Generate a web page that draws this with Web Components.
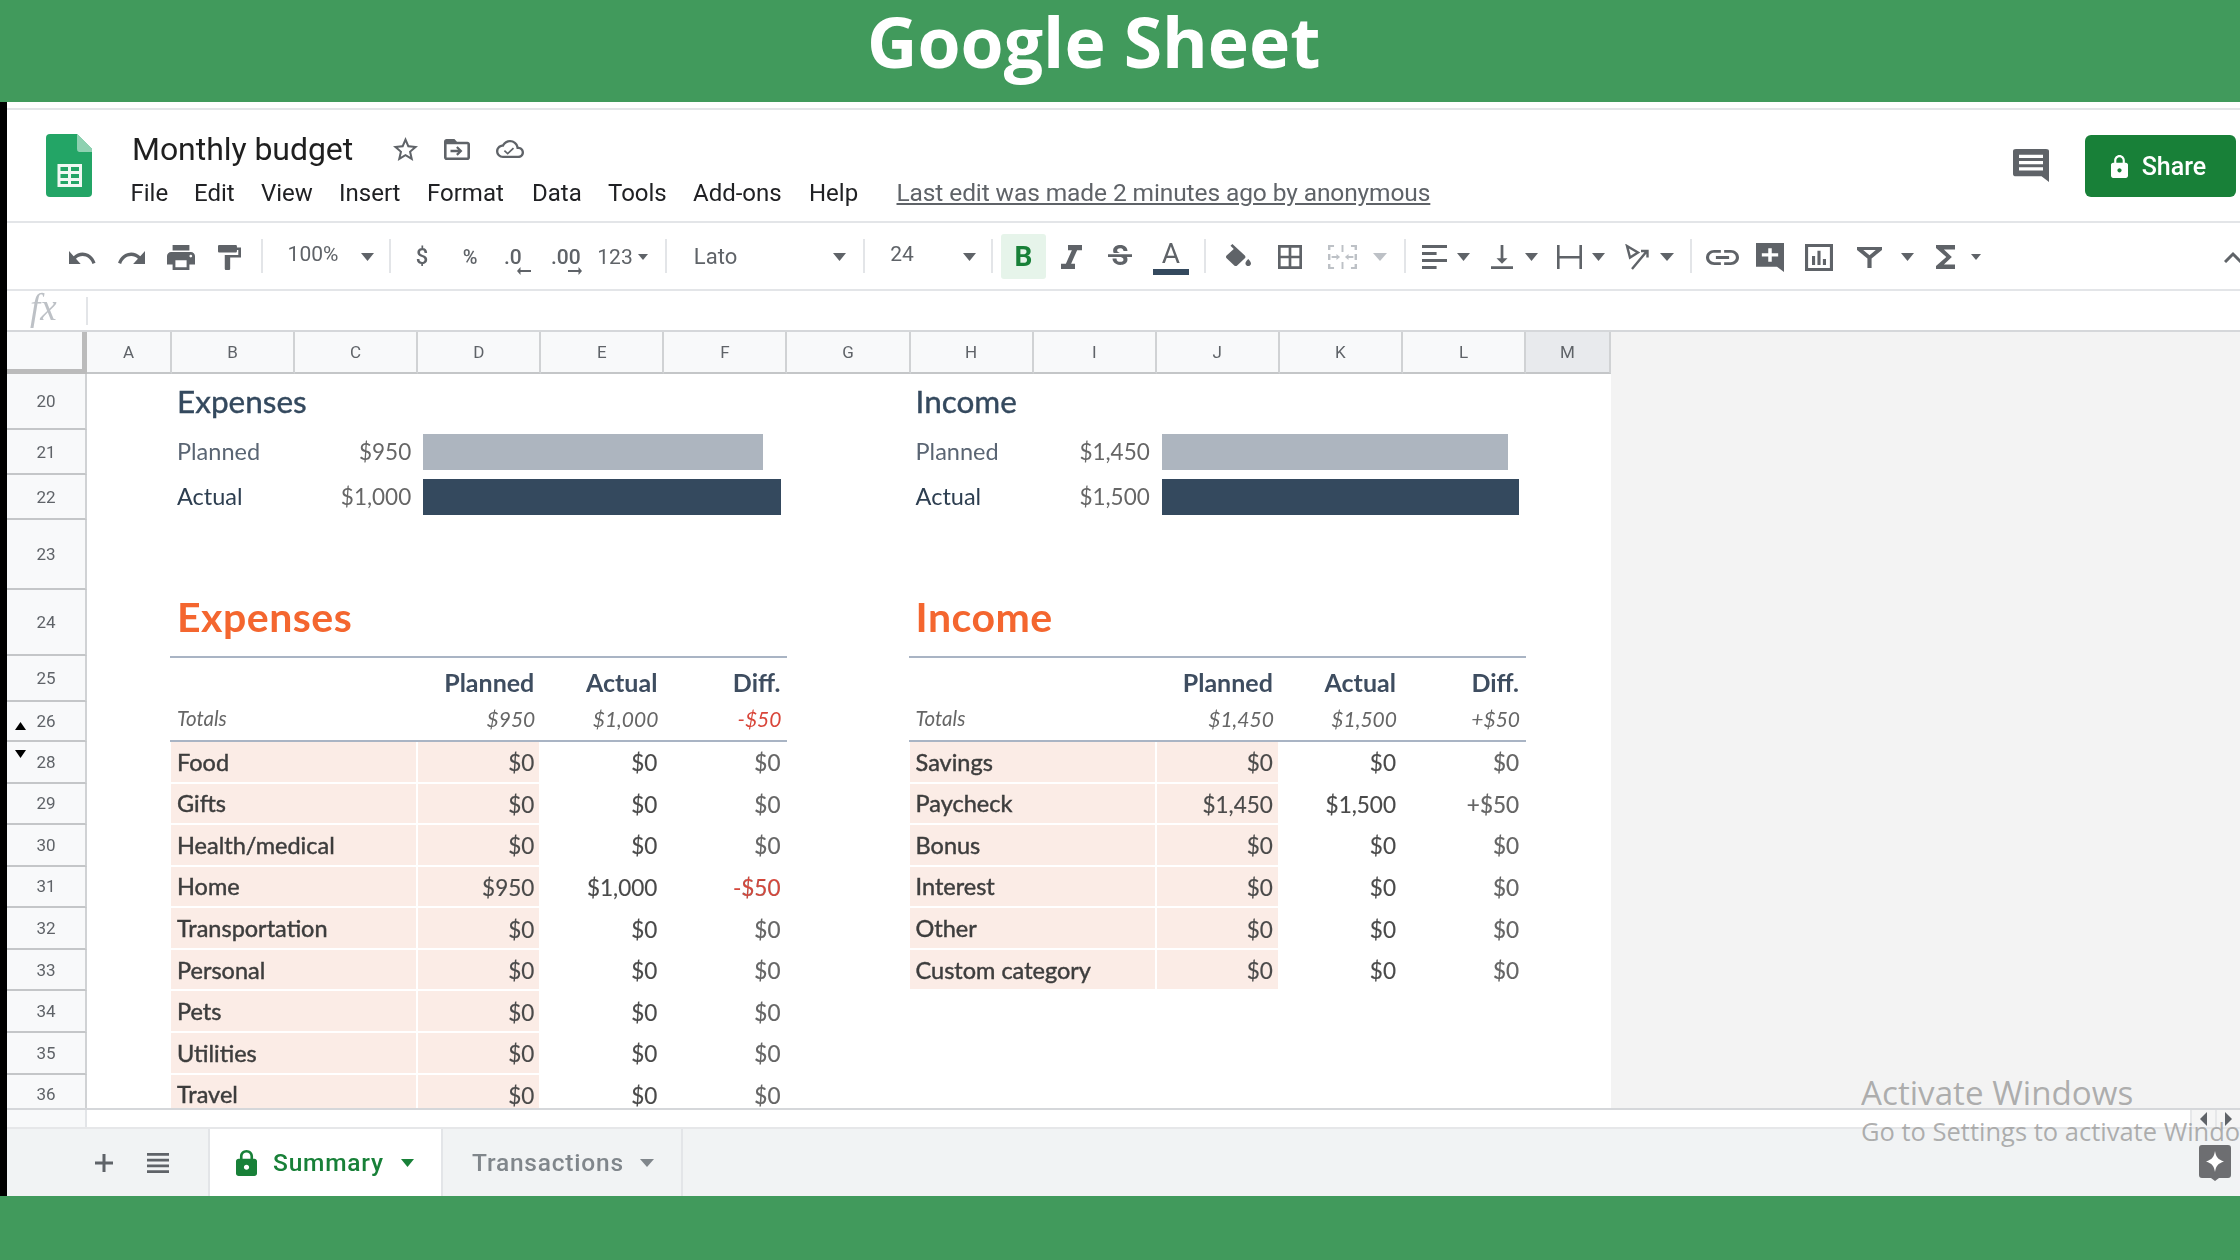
<!DOCTYPE html>
<html>
<head>
<meta charset="utf-8">
<title>Google Sheet</title>
<style>
    html, body { margin: 0; padding: 0; background: #419a5c; }
</style>
</head>
<body>
<budget-page></budget-page>
<script>
// svg helper, viewBox is tight on the glyph so w/h are what gets drawn
function ic(d, vb, w, h, fill, extra) {
    return `<svg xmlns="http://www.w3.org/2000/svg" viewBox="${vb}" width="${w}" height="${h}" preserveAspectRatio="none" fill="${fill || '#5f6368'}" fill-rule="evenodd" style="display:block;${extra || ''}"><path d="${d}"/></svg>`;
}
function caret(w, h, fill) {
    return ic('M0 0h10L5 6z', '0 0 10 6', w || 13, h || 8, fill);
}
const LOCK = 'M18 8h-1V6c0-2.76-2.24-5-5-5S7 3.24 7 6v2H6c-1.1 0-2 .9-2 2v10c0 1.1.9 2 2 2h12c1.1 0 2-.9 2-2V10c0-1.1-.9-2-2-2zm-6 9c-1.1 0-2-.9-2-2s.9-2 2-2 2 .9 2 2-.9 2-2 2zM9 8V6c0-1.66 1.34-3 3-3s3 1.34 3 3v2H9z';

class TopBanner extends HTMLElement {
    constructor() {
        super();
        this.attachShadow({ mode: 'open' }).innerHTML = `
        <style>
            :host { display: flex; flex: none; height: 102px; background: #419a5c; padding-left: 867px; box-sizing: border-box; }
            h1 { margin: 0; font: 700 69.7px/82px "Open Sans", sans-serif; color: #fff; white-space: nowrap; }
        </style>
        <h1><slot></slot></h1>`;
    }
}
customElements.define('top-banner', TopBanner);

class DocHeader extends HTMLElement {
    constructor() {
        super();
        const menu = [['File', 63.5], ['Edit', 67], ['View', 78], ['Insert', 88], ['Format', 105], ['Data', 76], ['Tools', 85], ['Add-ons', 116], ['Help', 87.5]];
        this.attachShadow({ mode: 'open' }).innerHTML = `
        <style>
            :host { display: flex; flex: none; height: 113px; box-sizing: border-box; padding: 24px 4px 0 39px; border-bottom: 2px solid #e3e5e8; background: #fff; font-family: Roboto, sans-serif; }
            .logo { margin-right: 40px; flex: none; }
            .main { display: flex; flex-direction: column; flex: 1; }
            .title { display: flex; align-items: center; height: 32px; margin-top: -1px; }
            .title b { font-weight: 400; font-size: 32px; letter-spacing: -.05px; color: #1f1f1f; width: 261px; white-space: nowrap; }
            .title svg { margin-right: 26px; }
            .menu { display: flex; align-items: center; height: 34px; margin: 11px 0 0 -1.5px; font-size: 24px; color: #202124; white-space: nowrap; }
            .menu a { display: block; flex: none; }
            .menu u { color: #5f6368; font-size: 24.5px; letter-spacing: -.1px; position: relative; top: -1px; }
            .comment { flex: none; margin: 15px 36px 0 0; }
            button { display: flex; align-items: center; justify-content: center; gap: 14px; width: 151px; height: 62px; margin-top: 1px; padding: 0 4px 0 0; border: 0; border-radius: 6px; background: #188038; color: #fff; font: 500 25px Roboto, sans-serif; }
        </style>
        <svg class="logo" width="46" height="63" viewBox="0 0 46 63">
            <path d="M4 0h27l15 15v44a4 4 0 0 1-4 4H4a4 4 0 0 1-4-4V4a4 4 0 0 1 4-4z" fill="#23a566"/>
            <path d="M31 0l15 15v3H33a3 3 0 0 1-2-3z" fill="#8ed1b1"/>
            <path d="M11.500 30h24.500v23H11.500zM14.500 33v4h7.500v-4zM25 33v4h8v-4zM14.500 40v4h7.500v-4zM25 40v4h8v-4zM14.500 47v3h7.500v-3zM25 47v3h8v-3z" fill="#f1f8f3" fill-rule="evenodd"/>
        </svg>
        <div class="main">
            <div class="title">
                <b>Monthly budget</b>
                ${ic('M22 9.24l-7.19-.62L12 2 9.19 8.63 2 9.24l5.46 4.73L5.82 21 12 17.27 18.18 21l-1.63-7.03L22 9.24zM12 15.4l-3.76 2.27 1-4.28-3.32-2.88 4.38-.38L12 6.1l1.71 4.04 4.38.38-3.32 2.88 1 4.28L12 15.4z', '2 2 20 19', 25, 24)}
                ${ic('M20 6h-8l-2-2H4c-1.1 0-2 .9-2 2v12c0 1.1.9 2 2 2h16c1.1 0 2-.9 2-2V8c0-1.1-.9-2-2-2zm0 12H4V8h16v10zM12.500 9.500l-1.200 1.200 1.500 1.500H7v1.800h5.800l-1.500 1.500 1.200 1.200 3.700-3.600z', '2 4 20 16', 26, 21)}
                ${ic('M19.35 10.04C18.67 6.59 15.64 4 12 4 9.11 4 6.6 5.64 5.35 8.04 2.34 8.36 0 10.91 0 14c0 3.31 2.69 6 6 6h13c2.76 0 5-2.24 5-5 0-2.64-2.05-4.78-4.65-4.96zM19 18H6c-2.21 0-4-1.79-4-4 0-2.05 1.53-3.76 3.56-3.97l1.07-.11.5-.95C8.08 7.14 9.94 6 12 6c2.62 0 4.88 1.86 5.39 4.43l.3 1.5 1.53.11c1.56.1 2.78 1.41 2.78 2.96 0 1.65-1.35 3-3 3zM10 15.200l-2.300-2.300-1 1L10 17.200l5.500-5.500-1-1z', '0 4 24 16', 28, 18)}
            </div>
            <div class="menu">
                ${menu.map(m => `<a style="width:${m[1]}px">${m[0]}</a>`).join('')}
                <u>Last edit was made 2 minutes ago by anonymous</u>
            </div>
        </div>
        ${ic('M2 0h20a2 2 0 0 1 2 2v27l-5-5H2a2 2 0 0 1-2-2V2a2 2 0 0 1 2-2zM4 5v3h16V5zM4 10.500v3h16v-3zM4 16v3h16v-3z', '0 0 24 29', 36, 33, '#5f6368').replace('<svg', '<svg class="comment"')}
        <button>${ic(LOCK, '4 1 16 21', 17, 23, '#fff')}<span>Share</span></button>`;
    }
}
customElements.define('doc-header', DocHeader);

class EditToolbar extends HTMLElement {
    constructor() {
        super();
        const txt = (s, extra) => `<span class="t" style="${extra || ''}">${s}</span>`;
        const sep = [261, 389, 665, 863, 991, 1204, 1404, 1690];
        const items = [
            [69, 28, ic('M12.5 8c-2.65 0-5.05.99-6.9 2.6L2 7v9h9l-3.62-3.62c1.39-1.16 3.16-1.88 5.12-1.88 3.54 0 6.55 2.31 7.6 5.5l2.37-.78C21.08 11.03 17.15 8 12.5 8z', '2 7 21.6 9', 28, 13)],
            [118, 27, ic('M18.4 10.6C16.55 8.99 14.15 8 11.5 8c-4.65 0-8.58 3.03-9.96 7.22L3.9 16c1.05-3.19 4.05-5.5 7.6-5.5 1.95 0 3.73.72 5.12 1.88L13 16h9V7l-3.6 3.6z', '1.5 7 20.5 9', 27, 13)],
            [167, 28, ic('M19 8H5c-1.66 0-3 1.34-3 3v6h4v4h12v-4h4v-6c0-1.66-1.34-3-3-3zm-3 11H8v-5h8v5zm3-7c-.55 0-1-.45-1-1s.45-1 1-1 1 .45 1 1-.45 1-1 1zm-1-9H6v4h12V3z', '2 3 20 18', 28, 25)],
            [218, 23, ic('M18 4V3c0-.55-.45-1-1-1H5c-.55 0-1 .45-1 1v4c0 .55.45 1 1 1h12c.55 0 1-.45 1-1V6h1v4H9v11c0 .55.45 1 1 1h2c.55 0 1-.45 1-1v-9h8V4h-3z', '4 2 17 20', 23, 25)],
            [288, 50, txt('100%', 'font-size:21px;margin-top:-5px')],
            [361, 13, caret()],
            [416, 12, txt('$', 'font-size:22px;font-weight:500')],
            [462, 16, txt('%', 'font-size:20px;font-weight:500')],
            [504, 27, `<span class="dec l"><span>.0</span>${ic('M6 0v3h18v2H6v3L0 4z', '0 0 24 8', 14, 8)}</span>`],
            [551, 31, `<span class="dec r"><span>.00</span>${ic('M18 0v3H0v2h18v3l6-4z', '0 0 24 8', 14, 8)}</span>`],
            [597, 36, txt('123', 'font-size:21px')],
            [638, 10, caret(10, 6)],
            [695, 41, txt('Lato', 'font-size:22px')],
            [833, 13, caret()],
            [890, 24, txt('24', 'font-size:21px;margin-top:-5px')],
            [963, 13, caret()],
            [1001, 45, `<span class="bold">B</span>`],
            [1061, 21, ic('M10 4v3h2.21l-3.42 8H6v3h8v-3h-2.21l3.42-8H18V4z', '6 4 12 14', 21, 24)],
            [1108, 24, ic('M6.85 7.08C6.85 4.37 9.45 3 12.24 3c1.64 0 3 .49 3.9 1.28.77.65 1.46 1.73 1.46 3.24h-3.01c0-.31-.05-.59-.15-.85-.29-.86-1.2-1.28-2.25-1.28-1.86 0-2.34 1.02-2.34 1.7 0 .48.25.88.74 1.21.38.25.77.48 1.41.7H7.39c-.21-.34-.54-.89-.54-1.92zM21 12v-2H3v2h9.62c1.15.45 1.96.75 1.96 1.97 0 1-.81 1.67-2.28 1.67-1.54 0-2.93-.54-2.93-2.51H6.4c0 .55.08 1.13.24 1.58.81 2.29 3.29 3.3 5.67 3.3 2.27 0 5.3-.89 5.3-4.05 0-.3-.01-1.16-.48-1.94H21V12z', '3 3 18 18', 24, 24)],
            [1153, 36, `<span class="color"><span>A</span><i></i></span>`],
            [1226, 25, ic('M16.56 8.94L7.62 0 6.21 1.41l2.38 2.38-5.15 5.15c-.59.59-.59 1.54 0 2.12l5.5 5.5c.29.29.68.44 1.06.44s.77-.15 1.06-.44l5.5-5.5c.59-.58.59-1.53 0-2.12zM19 11.5s-2 2.17-2 3.5c0 1.1.9 2 2 2s2-.9 2-2c0-1.33-2-3.5-2-3.5z', '3 0 18 17', 25, 22, '#5f6368', 'margin-top:-5px')],
            [1278, 24, ic('M3 3v18h18V3H3zm8 16H5v-6h6v6zm0-8H5V5h6v6zm8 8h-6v-6h6v6zm0-8h-6V5h6v6z', '3 3 18 18', 24, 24)],
            [1328, 29, ic('M0 0h5v2H2v3H0zM19 0h5v5h-2V2h-3zM0 19h2v3h3v2H0zM22 19h2v5h-5v-2h3zM0 9h2v6H0zM22 9h2v6h-2zM3 11h4V9l3 3-3 3v-2H3zM21 11h-4V9l-3 3 3 3v-2h4zM11.200 0h1.600v7h-1.600zM11.200 17h1.600v7h-1.600z', '0 0 24 24', 29, 24, '#bdc1c6')],
            [1373, 14, caret(14, 8, '#bdc1c6')],
            [1422, 25, ic('M0 0h24v3H0zM0 7h14v3H0zM0 14h24v3H0zM0 21h14v3H0z', '0 0 24 24', 25, 24)],
            [1457, 13, caret()],
            [1491, 22, ic('M16 13h-3V3h-2v10H8l4 4 4-4zM4 19v2h16v-2H4z', '4 3 16 18', 22, 24)],
            [1525, 13, caret()],
            [1557, 25, ic('M0 0h2.500v24H0zM21.500 0H24v24h-2.500zM2.500 11h19v2.500h-19z', '0 0 24 24', 25, 24)],
            [1592, 13, caret()],
            [1624, 26, `<svg width="26" height="26" viewBox="0 0 26 26" fill="none" stroke="#5f6368" stroke-width="2.4" style="display:block"><path d="M3 2l11 6.500-8 5z"/><path d="M8 25L23 7M17 7h6.500v6.500"/></svg>`],
            [1660, 14, caret(14, 8)],
            [1706, 33, ic('M3.9 12c0-1.71 1.39-3.1 3.1-3.1h4V7H7c-2.76 0-5 2.24-5 5s2.24 5 5 5h4v-1.9H7c-1.71 0-3.1-1.39-3.1-3.1zM8 13h8v-2H8v2zm9-6h-4v1.9h4c1.71 0 3.1 1.39 3.1 3.1s-1.39 3.1-3.1 3.1h-4V17h4c2.76 0 5-2.24 5-5s-2.24-5-5-5z', '2 7 20 10', 33, 15)],
            [1756, 28, ic('M0 0h24v28l-6-5H0zM10.500 5v5H5v3h5.500v5h3v-5H19v-3h-5.500V5z', '0 0 24 28', 28, 29)],
            [1805, 28, ic('M3 3h18v18H3zM5 5v14h14V5zM7.500 11h2v6h-2zM11 7.500h2v9.500h-2zM14.500 13h2v4h-2z', '3 3 18 18', 28, 27)],
            [1857, 25, ic('M0 0h24v3.500L14 13v11h-4V13L0 3.500zM6 3.500l6 6 6-6z', '0 0 24 24', 25, 21)],
            [1901, 13, caret()],
            [1936, 19, ic('M18 4H6v2l6.500 6L6 18v2h12v-3h-7l5-5-5-5h7z', '6 4 12 16', 19, 24)],
            [1971, 10, caret(10, 6)],
            [2224, 16, `<svg width="16" height="12" viewBox="0 0 16 12" fill="none" stroke="#5f6368" stroke-width="3" style="display:block"><path d="M1 11l8-8 8 8"/></svg>`]
        ];
        sep.forEach(x => items.push([x, 2, '<i class="sep"></i>']));
        items.sort((a, b) => a[0] - b[0]);
        let cursor = 7;
        const html = items.map(it => {
            const out = `<div class="it" style="margin-left:${it[0] - cursor}px;width:${it[1]}px">${it[2]}</div>`;
            cursor = it[0] + it[1];
            return out;
        }).join('');
        this.attachShadow({ mode: 'open' }).innerHTML = `
        <style>
            :host { display: flex; flex: none; align-items: center; height: 68px; padding-top: 2px; box-sizing: border-box; border-bottom: 2px solid #e3e5e8; background: #fff; font-family: Roboto, sans-serif; color: #5f6368; }
            .it { flex: none; display: flex; align-items: center; justify-content: center; }
            .t { white-space: nowrap; line-height: 1; }
            .sep { display: block; width: 2px; height: 34px; margin-top: -2px; background: #e3e5e8; }
            .dec { display: flex; flex-direction: column; font-size: 21px; font-weight: 500; line-height: 22px; width: 100%; margin-top: 6px; }
            .dec svg { margin-top: -1px; }
            .dec.l svg { align-self: flex-end; }
            .dec.r svg { align-self: flex-end; }
            .bold { display: flex; align-items: center; justify-content: center; width: 45px; height: 45px; margin-top: -1px; border-radius: 3px; background: #e6f4ea; color: #188038; font-size: 28px; font-weight: 700; }
            .color { display: flex; flex-direction: column; align-items: center; width: 100%; font-size: 28px; line-height: 28px; margin-top: 0; }
            .color i { display: block; width: 100%; height: 6px; margin-top: 1px; background: #34495e; }
        </style>
        ${html}`;
    }
}
customElements.define('edit-toolbar', EditToolbar);

class FormulaBar extends HTMLElement {
    constructor() {
        super();
        this.attachShadow({ mode: 'open' }).innerHTML = `
        <style>
            :host { display: flex; flex: none; align-items: center; height: 39px; box-sizing: border-box; background: #fff; }
            em { width: 79px; box-sizing: border-box; padding-left: 23px; font: italic 37px/38px "Liberation Serif", serif; color: #bdc1c6; margin-top: -5px; }
            i { display: block; width: 2px; height: 28px; background: #e3e5e8; }
        </style>
        <em>fx</em><i></i>`;
    }
}
customElements.define('formula-bar', FormulaBar);

class SheetGrid extends HTMLElement {
    constructor() {
        super();
        const rows = [20, 21, 22, 23, 24, 25, 26, 28, 29, 30, 31, 32, 33, 34, 35, 36];
        const heights = [56, 45, 45, 70, 66, 46, 40, 41.5, 41.6, 41.6, 41.6, 41.6, 41.6, 41.6, 41.6, 41.6];
        const letters = 'ABCDEFGHIJKLM'.split('');
        const rowOf = n => rows.indexOf(n) + 2;
        let c = '';
        const put = (col, span, row, cls, text) => {
            c += `<div class="${cls}" style="grid-column:${col}/span ${span};grid-row:${rowOf(row)}">${text}</div>`;
        };

        // headers
        c += `<div class="filler" style="grid-column:15;grid-row:1/-1"></div>`;
        c += `<div class="corner" style="grid-column:1;grid-row:1"></div>`;
        letters.forEach((l, i) => {
            c += `<div class="ch${l === 'M' ? ' sel' : ''}" style="grid-column:${i + 2};grid-row:1">${l}</div>`;
        });
        rows.forEach(n => {
            let mark = '';
            if (n === 26) mark = ic('M0 8L5 0l5 8z', '0 0 10 8', 11, 8, '#000', 'position:absolute;left:8px;bottom:10px');
            if (n === 28) mark = ic('M0 0l5 8 5-8z', '0 0 10 8', 11, 8, '#000', 'position:absolute;left:8px;top:8px');
            c += `<div class="rh" style="grid-column:1;grid-row:${rowOf(n)}">${n}${mark}</div>`;
        });
        c += `<div class="white" style="grid-column:2/15;grid-row:2/-1"></div>`;

        // a chart block and a table block, col is the grid line of its first column
        const block = (col, title, planned, actual, pw, aw, tot, lines) => {
            put(col, 2, 20, 'head', title);
            put(col, 1, 21, 'lab', 'Planned');
            put(col + 1, 1, 21, 'num grey', planned);
            put(col + 2, 3, 21, 'bar', `<i style="width:${pw}px;background:#adb5bf"></i>`);
            put(col, 1, 22, 'lab dark', 'Actual');
            put(col + 1, 1, 22, 'num grey', actual);
            put(col + 2, 3, 22, 'bar', `<i style="width:${aw}px;background:#34495e"></i>`);
            put(col, 2, 24, 'big', title);
            put(col, 5, 25, 'topline', '');
            put(col + 2, 1, 25, 'hn', 'Planned');
            put(col + 3, 1, 25, 'hn', 'Actual');
            put(col + 4, 1, 25, 'hn', 'Diff.');
            put(col, 5, 26, 'botline', '');
            put(col, 1, 26, 'tt', 'Totals');
            put(col + 2, 1, 26, 'tt r', tot[0]);
            put(col + 3, 1, 26, 'tt r', tot[1]);
            put(col + 4, 1, 26, 'tt r' + (tot[2][0] === '-' ? ' red' : ''), tot[2]);
            lines.forEach((l, i) => {
                const r = rows[7 + i];
                put(col, 2, r, 'pink first', '');
                put(col + 2, 1, r, 'pink', '');
                put(col, 2, r, 'cat', l[0]);
                put(col + 2, 1, r, 'val', l[1]);
                put(col + 3, 1, r, 'val', l[2]);
                put(col + 4, 1, r, 'val soft' + (l[3][0] === '-' ? ' red' : ''), l[3]);
            });
        };
        const z = ['$0', '$0', '$0'];
        block(3, 'Expenses', '$950', '$1,000', 340, 358, ['$950', '$1,000', '-$50'], [
            ['Food', ...z], ['Gifts', ...z], ['Health/medical', ...z],
            ['Home', '$950', '$1,000', '-$50'], ['Transportation', ...z], ['Personal', ...z],
            ['Pets', ...z], ['Utilities', ...z], ['Travel', ...z]
        ]);
        block(9, 'Income', '$1,450', '$1,500', 346, 357, ['$1,450', '$1,500', '+$50'], [
            ['Savings', ...z], ['Paycheck', '$1,450', '$1,500', '+$50'], ['Bonus', ...z],
            ['Interest', ...z], ['Other', ...z], ['Custom category', ...z]
        ]);

        this.attachShadow({ mode: 'open' }).innerHTML = `
        <style>
            :host { display: block; flex: none; height: 776px; overflow: hidden; border-top: 2px solid #d5d7da; border-bottom: 2px solid #d5d7da; background: #f3f3f3; }
            .g { display: grid; grid-template-columns: 80px 85px repeat(11, 123.1px) 85px 1fr; grid-template-rows: 42px ${heights.map(h => h + 'px').join(' ')}; font-family: Lato, sans-serif; }
            .filler { background: #f3f3f3; }
            .white { background: #fff; }
            .corner { background: #f8f9fa; border-right: 5px solid #bbb; border-bottom: 5px solid #bbb; box-sizing: border-box; }
            .ch { display: flex; align-items: center; justify-content: center; background: #f8f9fa; border-right: 2px solid #d0d2d4; border-bottom: 2px solid #c4c6c8; box-sizing: border-box; font: 17px Roboto, sans-serif; color: #5f6368; }
            .ch.sel { background: #e8eaed; }
            .rh { position: relative; display: flex; align-items: center; justify-content: center; background: #f8f9fa; border-right: 2px solid #d0d2d4; border-bottom: 2px solid #c4c6c8; box-sizing: border-box; font: 17px Roboto, sans-serif; color: #5f6368; }
            .head, .lab, .num, .big, .hn, .tt, .cat, .val { display: flex; align-items: center; white-space: nowrap; min-width: 0; z-index: 1; }
            .head, .lab, .big, .tt, .cat { padding-left: 5px; }
            .head { font-size: 31.5px; color: #34495e; padding-bottom: 2px; -webkit-text-stroke: .4px #34495e; }
            .lab { font-size: 23.5px; color: #5a6573; padding-bottom: 3px; }
            .lab.dark { color: #2d3e50; }
            .num { justify-content: flex-end; padding: 0 7px 2px 0; font-size: 22.5px; }
            .grey { color: #666; }
            .bar { display: flex; align-items: center; padding: 0 0 2px 5px; z-index: 1; }
            .bar i { display: block; height: 36px; }
            .big { font-size: 41px; font-weight: 700; letter-spacing: .5px; color: #f4662f; padding-bottom: 13px; }
            .topline { border-top: 2px solid #a9b4c4; margin-left: -2px; z-index: 1; }
            .botline { border-bottom: 2px solid #a9b4c4; margin-left: -2px; z-index: 1; }
            .hn { justify-content: flex-end; padding: 6px 7px 0 0; font-size: 25px; font-weight: 700; color: #3e4d60; }
            .tt { font-size: 20.5px; font-style: italic; color: #666; padding-bottom: 8px; }
            .tt.r { justify-content: flex-end; padding-left: 0; padding-right: 6px; font-size: 21px; }
            .red { color: #d9463a !important; }
            .pink { background: #fbece6; margin-bottom: 2px; border-right: 2px solid #fff; }
            .pink.first { margin-left: -1px; }
            .cat { font-size: 23.5px; color: #3d3d3d; padding-bottom: 2px; -webkit-text-stroke: .45px #3d3d3d; }
            .val { justify-content: flex-end; padding-right: 7px; font-size: 22.5px; color: #4a4a4a; -webkit-text-stroke: .15px #4a4a4a; }
            .soft { color: #666; }
        </style>
        <div class="g">${c}</div>`;
    }
}
customElements.define('sheet-grid', SheetGrid);

class SheetTabs extends HTMLElement {
    constructor() {
        super();
        this.attachShadow({ mode: 'open' }).innerHTML = `
        <style>
            :host { display: block; flex: none; font-family: Roboto, sans-serif; }
            .strip { display: flex; justify-content: flex-end; height: 17px; background: #fff; border-bottom: 2px solid #e6e7e9; }
            .strip .gut { width: 78px; background: #f8f9fa; border-right: 2px solid #e3e5e8; margin-right: auto; }
            .strip .nav { display: flex; align-items: center; justify-content: center; width: 25px; background: #f5f5f5; border-left: 2px solid #e6e7e9; box-sizing: border-box; }
            .bar { display: flex; align-items: center; height: 67px; background: #f1f3f4; }
            .plus { margin-left: 88px; }
            .all { margin: 0 39px 0 34px; }
            .tab { display: flex; align-items: center; height: 100%; box-sizing: border-box; white-space: nowrap; font-size: 24.5px; font-weight: 500; letter-spacing: .8px; }
            .on { width: 235px; padding-left: 26px; background: #fff; color: #188038; border-left: 2px solid #e3e5e8; border-right: 2px solid #e3e5e8; }
            .on span { margin: 0 16px 0 16px; width: 112px; }
            .off { width: 240px; padding-left: 29px; color: #80868b; border-right: 2px solid #e3e5e8; }
            .off span { margin-right: 17px; width: 151px; }
            .expl { margin-left: auto; margin-right: 9px; }
        </style>
        <div class="strip">
            <div class="gut"></div>
            <div class="nav">${ic('M6 0v12L0 6z', '0 0 6 12', 7, 14)}</div>
            <div class="nav">${ic('M0 0v12l6-6z', '0 0 6 12', 7, 14)}</div>
        </div>
        <div class="bar">
            ${ic('M10 0h4v10h10v4H14v10h-4V14H0v-4h10z', '0 0 24 24', 18, 18).replace('<svg', '<svg class="plus"')}
            ${ic('M0 0h24v3H0zM0 6.300h24v3H0zM0 12.600h24v3H0zM0 18.900h24v3H0z', '0 0 24 22', 22, 20).replace('<svg', '<svg class="all"')}
            <div class="tab on">${ic(LOCK, '4 1 16 21', 21, 26, '#188038')}<span>Summary</span>${caret(13, 8, '#188038')}</div>
            <div class="tab off"><span>Transactions</span>${caret(14, 8, '#80868b')}</div>
            <svg class="expl" width="32" height="36" viewBox="0 0 32 36"><path d="M3 0h26a3 3 0 0 1 3 3v27a3 3 0 0 1-3 3h-9l-4 3-4-3H3a3 3 0 0 1-3-3V3a3 3 0 0 1 3-3z" fill="#6d6e71"/><path d="M16 6c1 6 3 8.500 9 10.500-6 2-8 4.500-9 10.500-1-6-3-8.500-9-10.500 6-2 8-4.500 9-10.500z" fill="#fff"/></svg>
        </div>`;
    }
}
customElements.define('sheet-tabs', SheetTabs);

class ActivateMark extends HTMLElement {
    constructor() {
        super();
        this.attachShadow({ mode: 'open' }).innerHTML = `
        <style>
            :host { position: absolute; left: 1861px; top: 1070px; width: 379px; overflow: hidden; font-family: "Open Sans", sans-serif; color: rgba(150,150,150,.75); white-space: nowrap; pointer-events: none; }
            div { font-size: 33.2px; line-height: 46px; }
            p { margin: 0; font-size: 25.5px; line-height: 40px; margin-top: -5px; }
        </style>
        <div>Activate Windows</div>
        <p>Go to Settings to activate Windows.</p>`;
    }
}
customElements.define('activate-mark', ActivateMark);

class BudgetPage extends HTMLElement {
    constructor() {
        super();
        this.attachShadow({ mode: 'open' }).innerHTML = `
        <style>
            :host { display: flex; flex-direction: column; position: relative; width: 2240px; height: 1260px; overflow: hidden; background: #419a5c; }
            .main { display: flex; flex: none; height: 1094px; background: #000; }
            .app { flex: 1; min-width: 0; margin-left: 7px; background: #fff; display: flex; flex-direction: column; filter: blur(.45px); }
            .gap { flex: none; height: 6px; background: #fff; border-bottom: 2px solid #e3e5e8; }
        </style>
        <top-banner>Google Sheet</top-banner>
        <div class="main">
            <div class="app">
                <div class="gap"></div>
                <doc-header></doc-header>
                <edit-toolbar></edit-toolbar>
                <formula-bar></formula-bar>
                <sheet-grid></sheet-grid>
                <sheet-tabs></sheet-tabs>
            </div>
        </div>
        <activate-mark></activate-mark>`;
    }
}
customElements.define('budget-page', BudgetPage);
</script>
</body>
</html>
